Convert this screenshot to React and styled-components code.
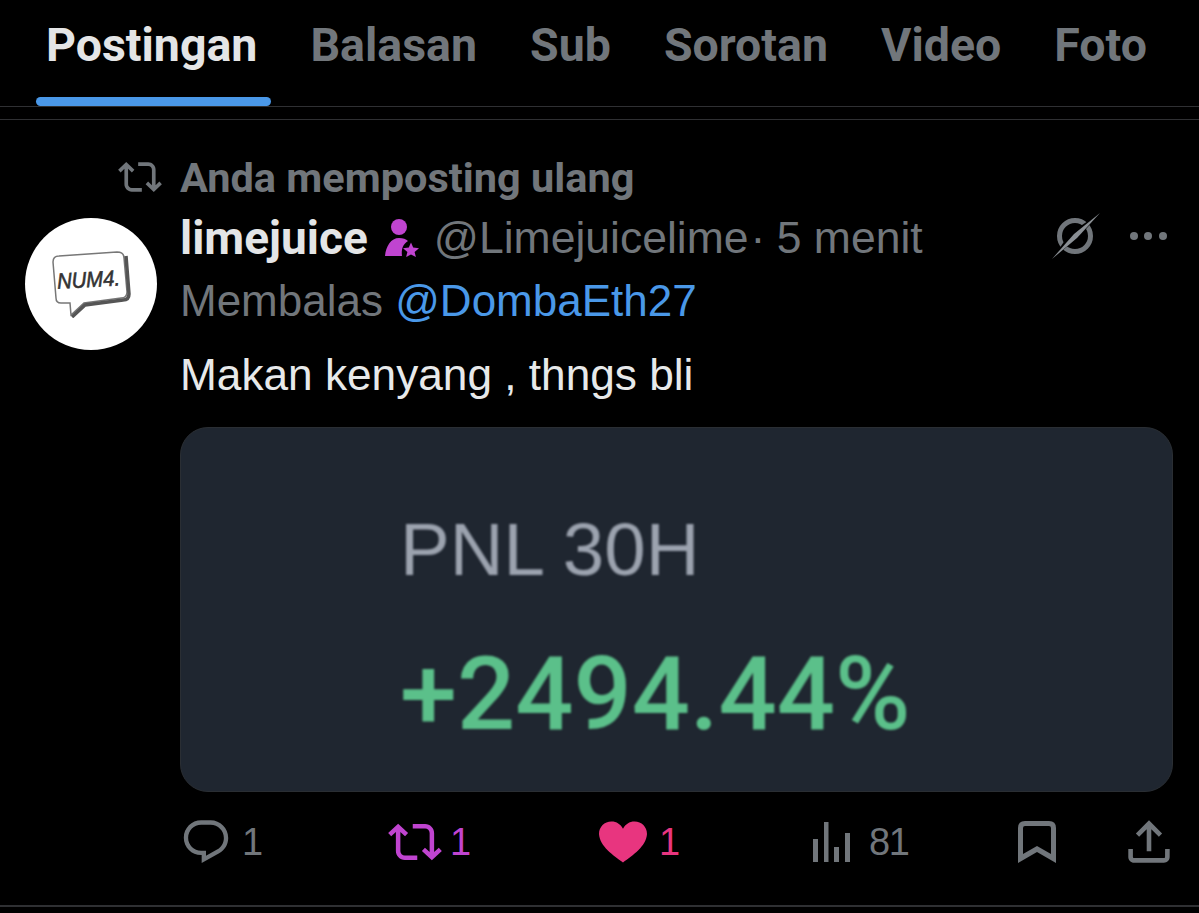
import React from "react";
import styled, { createGlobalStyle } from "styled-components";

const GlobalStyle = createGlobalStyle`
  html, body {
    margin: 0;
    padding: 0;
    background: #000;
  }
`;

const Page = styled.div`
  width: 1199px;
  height: 913px;
  overflow: hidden;
  background: #000;
  color: #e7e9ea;
  font-family: "Liberation Sans", Arial, sans-serif;
`;

const TabBar = styled.nav`
  display: flex;
  gap: 29px;
  height: 106px;
  padding-left: 34px;
  border-bottom: 1px solid #2f3033;
`;

const Tab = styled.div`
  display: flex;
  flex-direction: column;
  height: 106px;
  padding: 0 12px;
  font-family: Roboto, sans-serif;
  font-weight: 700;
  font-size: 46.5px;
  line-height: 91px;
  white-space: nowrap;
  color: ${(p) => (p.$active ? "#e4e5e6" : "#71767b")};

  &::after {
    content: "";
    display: ${(p) => (p.$active ? "block" : "none")};
    margin: auto -14px 0 -10px;
    height: 9px;
    border-radius: 5px;
    background: #4a98e8;
  }
`;

const Divider = styled.div`
  height: 1px;
  margin-top: 12px;
  background: #2f3033;
`;

const Post = styled.article`
  display: grid;
  grid-template-columns: 132px 1fr;
  grid-template-rows: auto 1fr;
  column-gap: 23px;
  padding: 33px 26px 0 25px;
  height: 785px;
  box-sizing: border-box;
`;

const RepostLine = styled.div`
  grid-column: 1 / 3;
  display: flex;
  align-items: center;
  gap: 18px;
  height: 48px;
  padding-left: 93px;
  color: #71767b;
  font-family: Roboto, sans-serif;
  font-weight: 700;
  font-size: 41.5px;
  margin-bottom: 17px;
  white-space: nowrap;

  & svg {
    fill: currentColor;
  }
`;

const Avatar = styled.div`
  width: 132px;
  height: 132px;
  border-radius: 50%;
  background: #fff;
  display: flex;
  align-items: center;
  justify-content: center;

  & svg {
    width: 80px;
    height: 68px;
  }
`;

const Body = styled.div`
  display: flex;
  flex-direction: column;
  min-width: 0;
`;

const MetaRow = styled.div`
  display: flex;
  align-items: center;
  height: 42px;
  margin-top: -1px;
  font-size: 44.5px;
  color: #71767b;
  white-space: nowrap;
`;

const Name = styled.span`
  font-family: Roboto, sans-serif;
  font-weight: 700;
  font-size: 46px;
  color: #e4e5e6;
`;

const Badge = styled.svg`
  width: 37px;
  height: 38px;
  margin: 0 14px 0 15px;
`;

const Sep = styled.span`
  margin: 0 -1px 0 2px;
`;

const MetaActions = styled.div`
  margin-left: auto;
  display: flex;
  align-items: center;
  gap: 27px;
  padding-right: 6px;
  margin-bottom: 4px;
`;

const ReplyRow = styled.div`
  margin-top: 20px;
  height: 44px;
  line-height: 44px;
  font-size: 44px;
  color: #71767b;
  white-space: nowrap;

  & a {
    color: #4a98e8;
  }
`;

const PostText = styled.p`
  margin: 29px 0 0;
  height: 46px;
  line-height: 46px;
  font-size: 44.2px;
  color: #e7e9ea;
`;

const MediaCard = styled.div`
  margin-top: 29px;
  height: 365px;
  border: 1px solid #2a2e33;
  border-radius: 28px;
  background: #1f2630;
  box-sizing: border-box;
  padding: 80px 0 0 219px;
  display: flex;
  flex-direction: column;
`;

const CardLabel = styled.div`
  font-size: 74.5px;
  line-height: 84px;
  color: #9ca3af;
  filter: blur(0.8px);
`;

const CardValue = styled.div`
  margin-top: 47px;
  font-family: Roboto, sans-serif;
  font-weight: 500;
  font-size: 102.5px;
  line-height: 110px;
  color: #5bc08a;
  filter: blur(0.8px);
`;

const Actions = styled.div`
  display: grid;
  grid-template-columns: 208px 211px 214px 205px 110px auto;
  align-items: center;
  margin-top: 23px;
  height: 48px;
`;

const Action = styled.div`
  display: flex;
  align-items: center;
  gap: ${(p) => p.$gap}px;
  color: ${(p) => p.$color || "#71767b"};
  font-size: 38px;
  letter-spacing: -1.5px;

  & svg {
    fill: currentColor;
    display: block;
  }
`;

const BottomLine = styled.div`
  height: 2px;
  background: #2f3033;
`;

const repostPath =
  "M4.5 3.88l4.432 4.14-1.364 1.46L5.5 7.55V16c0 1.1.896 2 2 2H13v2H7.5c-2.209 0-4-1.79-4-4V7.55L1.432 9.48.068 8.02 4.5 3.88zM16.5 6H11V4h5.5c2.209 0 4 1.79 4 4v8.45l2.068-1.93 1.364 1.46-4.432 4.14-4.432-4.14 1.364-1.46 2.068 1.93V8c0-1.1-.896-2-2-2z";

const RepostIcon = ({ size }) => (
  <svg viewBox="0 0 24 24" width={size} height={size}>
    <path d={repostPath} />
  </svg>
);

const ReplyIcon = () => (
  <svg viewBox="0 0 24 24" width="52" height="52">
    <path d="M1.751 10c0-4.42 3.584-8 8.005-8h4.366c4.49 0 8.129 3.64 8.129 8.13 0 2.96-1.607 5.68-4.196 7.11l-8.054 4.46v-3.69h-.067c-4.49.1-8.183-3.51-8.183-8.01zm8.005-6c-3.317 0-6.005 2.69-6.005 6 0 3.37 2.77 6.08 6.138 6.01l.351-.01h1.761v2.3l5.087-2.81c1.951-1.08 3.163-3.13 3.163-5.36 0-3.39-2.744-6.13-6.129-6.13H9.756z" />
  </svg>
);

const HeartIcon = () => (
  <svg viewBox="0 0 54 46" width="48" height="42">
    <path d="M27 46C16 38 1 28 0 14 0 6 6 0 14 0c6 0 10 3 13 8 3-5 7-8 13-8 8 0 14 6 14 14-1 14-16 24-27 32z" />
  </svg>
);

const ViewsIcon = () => (
  <svg viewBox="0 0 37 40" width="37" height="40">
    <rect x="0" y="17" width="5" height="23" />
    <rect x="11" y="0" width="4.5" height="40" />
    <rect x="21" y="25" width="5" height="15" />
    <rect x="32" y="11" width="5" height="29" />
  </svg>
);

const BookmarkIcon = () => (
  <svg viewBox="0 0 38 42" width="38" height="42">
    <path
      fillRule="evenodd"
      d="M7 0H31Q38 0 38 7V42L19 31L0 42V7Q0 0 7 0ZM7 5Q5 5 5 7V33L19 25L33 33V7Q33 5 31 5Z"
    />
  </svg>
);

const ShareIcon = () => (
  <svg viewBox="3 2 18 20" width="42" height="46">
    <path d="M12 2.59l5.7 5.7-1.41 1.42L13 6.41V16h-2V6.41l-3.3 3.3-1.41-1.42L12 2.59zM21 15l-.02 3.51c0 1.38-1.12 2.49-2.5 2.49H5.5C4.11 21 3 19.88 3 18.5V15h2v3.5c0 .28.22.5.5.5h12.98c.28 0 .5-.22.5-.5L19 15h2z" />
  </svg>
);

const GrokIcon = () => (
  <svg viewBox="0 0 52 48" width="52" height="48">
    <circle cx="25" cy="24" r="15.5" fill="none" stroke="#71767b" strokeWidth="5" />
    <path d="M50 1 L30 24 L2 47 L20 21 Z" fill="#000" />
    <path d="M50 1 L27 26 L2 47 L24 22 Z" fill="#8a8f94" />
  </svg>
);

const DotsIcon = () => (
  <svg viewBox="0 0 38 10" width="38" height="10">
    <circle cx="5" cy="5" r="4" fill="#71767b" />
    <circle cx="19" cy="5" r="4" fill="#71767b" />
    <circle cx="34" cy="5" r="4" fill="#71767b" />
  </svg>
);

const tabs = ["Postingan", "Balasan", "Sub", "Sorotan", "Video", "Foto"];

export default function App() {
  return (
    <Page>
      <GlobalStyle />
      <TabBar>
        {tabs.map((t, i) => (
          <Tab key={t} $active={i === 0}>
            {t}
          </Tab>
        ))}
      </TabBar>
      <Divider />
      <Post>
        <RepostLine>
          <RepostIcon size={44} />
          Anda memposting ulang
        </RepostLine>
        <Avatar>
          <svg viewBox="0 0 80 68">
            <path
              d="M2 12 Q2 6 8 6 L66 2 Q73 2 73 8 L76 42 Q76 48 70 48 L33 53 L20 65 L19 53 L10 53 Q5 53 5 48 Z"
              fill="#fff"
              stroke="#777"
              strokeWidth="1.5"
            />
            <path d="M75 6 L78 44 Q78 50 72 50 L34 55 L21 67" fill="none" stroke="#555" strokeWidth="3.5" />
            <text
              x="6"
              y="37"
              fontFamily="Liberation Sans, sans-serif"
              fontStyle="italic"
              fontWeight="400"
              fontSize="22"
              fill="#333"
              stroke="#333"
              strokeWidth="0.6"
              transform="rotate(-3 40 30)"
              textLength="63"
              lengthAdjust="spacingAndGlyphs"
            >
              NUM4.
            </text>
          </svg>
        </Avatar>
        <Body>
          <MetaRow>
            <Name>limejuice</Name>
            <Badge viewBox="0 0 37 38">
              <circle cx="16" cy="8" r="8" fill="#c044d0" />
              <path d="M2 37 C3 27 8 19 16 19 C20 19 23 20 25 22 C20 25 18 30 19 37 Z" fill="#c044d0" />
              <path
                d="M28 23.5 L30.2 28.6 L36 29.2 L31.6 33 L32.9 38 L28 35.4 L23.1 38 L24.4 33 L20 29.2 L25.8 28.6 Z"
                fill="#c044d0"
              />
            </Badge>
            @Limejuicelime
            <Sep>·</Sep>&nbsp;5 menit
            <MetaActions>
              <GrokIcon />
              <DotsIcon />
            </MetaActions>
          </MetaRow>
          <ReplyRow>
            Membalas <a>@DombaEth27</a>
          </ReplyRow>
          <PostText>Makan kenyang , thngs bli</PostText>
          <MediaCard>
            <CardLabel>PNL 30H</CardLabel>
            <CardValue>+2494.44%</CardValue>
          </MediaCard>
          <Actions>
            <Action $gap={10}>
              <ReplyIcon />1
            </Action>
            <Action $color="#c044d0" $gap={8}>
              <RepostIcon size={54} />1
            </Action>
            <Action $color="#e8357f" $gap={12}>
              <HeartIcon />1
            </Action>
            <Action $gap={19}>
              <ViewsIcon />
              81
            </Action>
            <Action>
              <BookmarkIcon />
            </Action>
            <Action>
              <ShareIcon />
            </Action>
          </Actions>
        </Body>
      </Post>
      <BottomLine />
    </Page>
  );
}
